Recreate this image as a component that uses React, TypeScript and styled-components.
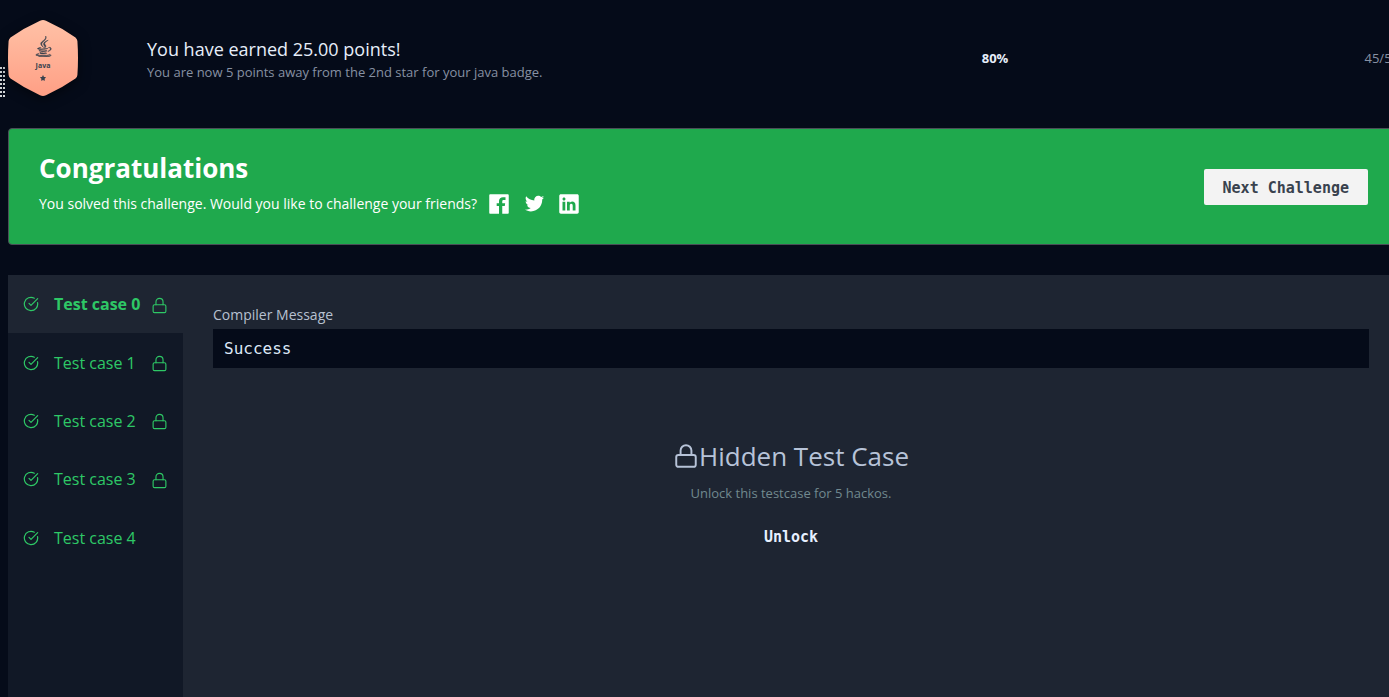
import React, { useState } from "react";
import styled, { createGlobalStyle } from "styled-components";
import { CircleCheckBig } from "lucide-react";
import { FaJava, FaStar } from "react-icons/fa";
import { IoLogoFacebook, IoLogoLinkedin, IoLogoTwitter } from "react-icons/io";

const sans = `"Open Sans", "Noto Sans", sans-serif`;
const mono = `"DejaVu Sans Mono", "Liberation Mono", monospace`;

const GlobalStyle = createGlobalStyle`
  *, *::before, *::after { box-sizing: border-box; }
  body {
    margin: 0;
    background: #050b19;
    color: #e7eefa;
    font-family: ${sans};
    overflow: hidden auto;
  }
  h1, h2, p { margin: 0; font-weight: 400; }
  button { font: inherit; border: 0; cursor: pointer; }
`;

const Page = styled.main`
  position: relative;
  display: flex;
  flex-direction: column;
  min-height: 100vh;
  margin: 0 -10px 0 8px;
`;

const DragHandle = styled.span`
  position: absolute;
  left: -8px;
  top: 67px;
  width: 5px;
  height: 30px;
  background: linear-gradient(#050b19, #050b19) 2px 0 / 1px 100% no-repeat,
    repeating-linear-gradient(#d3d5d8 0 2px, #050b19 2px 4px);
`;

const Header = styled.header`
  display: flex;
  align-items: center;
  padding: 20px 0 32px;
`;

const Badge = styled.div`
  position: relative;
  width: 70px;
  height: 76px;
  padding-top: 16px;
  margin-right: 69px;
  color: #39424e;
  font-size: 7px;
  line-height: 18px;
  font-weight: 700;
`;

const Hexagon = styled.svg`
  position: absolute;
  inset: 0;
  filter: drop-shadow(0 3px 6px rgba(0, 0, 0, 0.5));
`;

const BadgeContent = styled.div`
  position: relative;
  display: flex;
  flex-direction: column;
  align-items: center;
`;

const Score = styled.div`
  flex: 1;
  padding-top: 4px;
`;

const ScoreTitle = styled.h1`
  font-size: 18px;
  line-height: 24px;
`;

const ScoreNote = styled.p`
  font-size: 13px;
  line-height: 22px;
  color: #8791a3;
`;

const Progress = styled.div`
  display: flex;
  justify-content: space-between;
  width: 30%;
  font-size: 13px;
  line-height: 20px;
  color: #8791a3;
`;

const Percent = styled.strong`
  color: #e7eefa;
`;

const Banner = styled.section`
  display: flex;
  align-items: center;
  justify-content: space-between;
  height: 117px;
  padding: 0 30px;
  border: 1px solid #4a4f57;
  border-radius: 4px;
  background: #1fa94d;
  color: #fff;
`;

const BannerText = styled.div`
  padding-bottom: 2px;
`;

const BannerTitle = styled.h2`
  font-size: 26px;
  line-height: 36px;
  font-weight: 700;
`;

const Share = styled.div`
  display: flex;
  align-items: center;
  gap: 9px;
  height: 36px;
  font-size: 14px;
`;

const ShareLink = styled.a`
  display: flex;
  justify-content: center;
  width: 26px;
  color: #fff;
`;

const NextButton = styled.button`
  && {
    height: 36px;
    padding: 2px 19px 0;
    border-radius: 2px;
    background: #f3f3f3;
    color: #39424e;
    font: 700 15px ${mono};
  }
`;

const Results = styled.section`
  display: flex;
  flex: 1;
  margin-top: 30px;
  background: #1e2532;
`;

const Sidebar = styled.div`
  width: 175px;
  background: #111826;
`;

const TabList = styled.div`
  display: grid;
  grid-auto-rows: 1fr;
  min-height: 292px;
`;

const Tab = styled.button<{ $active: boolean }>`
  && {
    display: grid;
    grid-template-columns: 16px 1fr 18px;
    align-items: center;
    gap: 15px;
    padding: 0 14px 0 15px;
    background: ${(p) => (p.$active ? "#1e2532" : "transparent")};
    color: #2ec866;
    font-size: 16px;
    font-weight: ${(p) => (p.$active ? 700 : 400)};
    text-align: left;
    white-space: nowrap;
  }
`;

const TabName = styled.span`
  margin-right: -15px;
`;

const TabLock = styled.span`
  display: flex;
  padding-top: 2px;
`;

const Panel = styled.div`
  flex: 1;
  padding: 30px;
`;

const OutputLabel = styled.div`
  font-size: 14px;
  line-height: 20px;
  padding-bottom: 4px;
  color: #b7c1d1;
`;

const Output = styled.output`
  display: block;
  padding: 0 11px;
  background: #050b19;
  color: #dce8f7;
  font: 16px/39px ${mono};
`;

const Hidden = styled.div`
  display: flex;
  flex-direction: column;
  align-items: center;
  padding-top: 70px;
`;

const HiddenTitle = styled.h2`
  display: flex;
  align-items: center;
  font-size: 26px;
  line-height: 36px;
  color: #b7c3d8;
`;

const HiddenNote = styled.p`
  padding-top: 8px;
  font-size: 13px;
  line-height: 22px;
  color: #71898f;
`;

const UnlockButton = styled.button`
  && {
    margin-top: 15px;
    padding: 8px 20px;
    background: transparent;
    color: #e7f0ff;
    font: 700 15px/20px ${mono};
  }
`;

function Padlock({ size, stroke }: { size: number; stroke: number }) {
  return (
    <svg width={size} height={size} viewBox="0 0 24 24" fill="none" stroke="currentColor"
      strokeWidth={stroke} strokeLinecap="round" strokeLinejoin="round" aria-hidden="true">
      <rect x="3" y="11" width="18" height="11" rx="2" />
      <path d="M7 11V7a5 5 0 0 1 10 0v4" />
    </svg>
  );
}

const cases = [
  { name: "Test case 0", locked: true },
  { name: "Test case 1", locked: true },
  { name: "Test case 2", locked: true },
  { name: "Test case 3", locked: true },
  { name: "Test case 4", locked: false },
];

export default function App() {
  const [active, setActive] = useState(0);
  return (
    <>
      <GlobalStyle />
      <Page>
        <DragHandle />
        <Header>
          <Badge>
            <Hexagon width="70" height="76" viewBox="0 0 70 76" aria-hidden="true">
              <defs>
                <linearGradient id="bronze" x1="0" y1="0" x2="0" y2="1">
                  <stop offset="0" stopColor="#ffc1a6" />
                  <stop offset="1" stopColor="#ff9f85" />
                </linearGradient>
              </defs>
              <path fill="url(#bronze)" d="M32 .8Q35 -.7 38 .8Q54 8 67.500 17.500Q69.200 19 69.400 21Q70.600 38 69.400 55Q69.200 57 67.500 58.500Q54 68 38 75.200Q35 76.700 32 75.200Q16 68 2.500 58.500Q.8 57 .6 55Q-.6 38 .6 21Q.8 19 2.500 17.500Q16 8 32 .8Z" />
            </Hexagon>
            <BadgeContent>
              <FaJava size={21} stroke="currentColor" strokeWidth={12} aria-hidden="true" />
              <span>Java</span>
              <FaStar size={6} aria-hidden="true" />
            </BadgeContent>
          </Badge>
          <Score>
            <ScoreTitle>You have earned 25.00 points!</ScoreTitle>
            <ScoreNote>You are now 5 points away from the 2nd star for your java badge.</ScoreNote>
          </Score>
          <Progress>
            <Percent>80%</Percent>
            <span>45/50</span>
          </Progress>
        </Header>

        <Banner>
          <BannerText>
            <BannerTitle>Congratulations</BannerTitle>
            <Share>
              <span>You solved this challenge. Would you like to challenge your friends?</span>
              <ShareLink href="#facebook" aria-label="Share on Facebook"><IoLogoFacebook size={26} /></ShareLink>
              <ShareLink href="#twitter" aria-label="Share on Twitter"><IoLogoTwitter size={21} /></ShareLink>
              <ShareLink href="#linkedin" aria-label="Share on LinkedIn"><IoLogoLinkedin size={26} /></ShareLink>
            </Share>
          </BannerText>
          <NextButton type="button">Next Challenge</NextButton>
        </Banner>

        <Results>
          <Sidebar>
            <TabList role="tablist" aria-orientation="vertical">
              {cases.map((c, i) => (
                <Tab key={c.name} type="button" role="tab" aria-selected={i === active}
                  $active={i === active} onClick={() => setActive(i)}>
                  <CircleCheckBig size={16} strokeWidth={1.8} aria-hidden="true" />
                  <TabName>{c.name}</TabName>
                  {c.locked && <TabLock><Padlock size={17} stroke={1.6} /></TabLock>}
                </Tab>
              ))}
            </TabList>
          </Sidebar>
          <Panel role="tabpanel">
            <OutputLabel id="compiler-label">Compiler Message</OutputLabel>
            <Output aria-labelledby="compiler-label">Success</Output>
            <Hidden>
              <HiddenTitle><Padlock size={26} stroke={1.8} />Hidden Test Case</HiddenTitle>
              <HiddenNote>Unlock this testcase for 5 hackos.</HiddenNote>
              <UnlockButton type="button">Unlock</UnlockButton>
            </Hidden>
          </Panel>
        </Results>
      </Page>
    </>
  );
}
